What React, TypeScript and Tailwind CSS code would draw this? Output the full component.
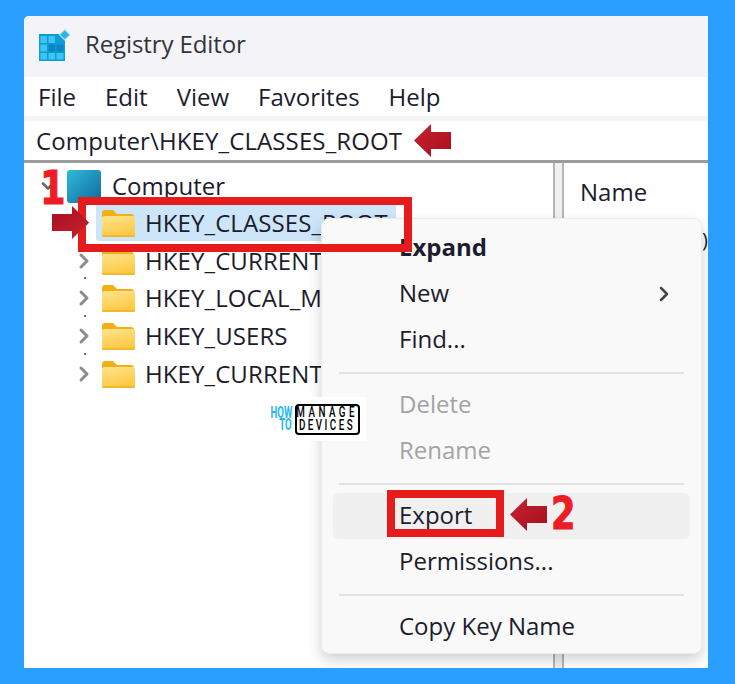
import { ChevronDown, ChevronRight } from 'lucide-react';

const FONT = "font-['Open_Sans','Noto_Sans',sans-serif]";

const rootKeys = [
  'HKEY_CLASSES_ROOT',
  'HKEY_CURRENT_USER',
  'HKEY_LOCAL_MACHINE',
  'HKEY_USERS',
  'HKEY_CURRENT_CONFIG',
];

function RegistryIcon() {
  return (
    <svg width="34" height="34" viewBox="0 0 34 34" className="-mt-[3px] shrink-0">
      <rect x="1" y="6" width="26" height="27" fill="#0f9bd7" />
      <g fill="#3cc4f5">
        <rect x="2.5" y="8" width="6.5" height="7" />
        <rect x="10.5" y="8" width="6.5" height="7" />
        <rect x="2.5" y="16.5" width="6.5" height="7" />
        <rect x="18.5" y="25" width="7" height="6.5" />
        <rect x="10.5" y="25" width="6.5" height="6.5" />
        <rect x="2.5" y="25" width="6.5" height="6.5" />
      </g>
      <g fill="#0a86c4">
        <rect x="10.5" y="16.5" width="6.5" height="7" />
        <rect x="18.5" y="16.5" width="7" height="7" />
      </g>
      <rect x="23" y="3" width="7.5" height="7.5" transform="rotate(45 26.75 6.75)" fill="#2fb4e8" stroke="#bfe6f7" strokeWidth="1" />
    </svg>
  );
}

function FolderIcon() {
  return (
    <svg width="34" height="28" viewBox="0 0 34 28" className="shrink-0">
      <defs>
        <linearGradient id="folderBody" x1="0" y1="0" x2="0.3" y2="1">
          <stop offset="0" stopColor="#ffe48e" />
          <stop offset="1" stopColor="#fdc944" />
        </linearGradient>
      </defs>
      <path d="M1 4a3 3 0 0 1 3-3h8l4 4h14a3 3 0 0 1 3 3v4H1z" fill="#f3b016" />
      <rect x="1" y="7" width="33" height="21" rx="2.5" fill="url(#folderBody)" />
      <rect x="1" y="26" width="33" height="2" rx="1" fill="#f2b92e" />
    </svg>
  );
}

function RedArrow({ flip }: { flip?: boolean }) {
  return (
    <svg width="37" height="33" viewBox="0 0 37 33" className={flip ? 'rotate-180' : ''}>
      <defs>
        <linearGradient id={flip ? 'arrowB' : 'arrowA'} x1="0" y1="0" x2="1" y2="1">
          <stop offset="0" stopColor="#a60f22" />
          <stop offset="1" stopColor="#c8222c" />
        </linearGradient>
      </defs>
      <path d="M0 8h20V0l17 16.500-17 16.500v-8H0z" fill={`url(#${flip ? 'arrowB' : 'arrowA'})`} />
    </svg>
  );
}

function StepNumber({ value, className }: { value: string; className: string }) {
  return (
    <span
      className={`absolute origin-left scale-x-[0.8] font-['DejaVu_Sans',sans-serif] font-bold text-[#ee1c25] [-webkit-text-stroke:1px_#ee1c25] ${className}`}
    >
      {value}
    </span>
  );
}

function TreeRow({ label, selected, dot }: { label: string; selected?: boolean; dot?: boolean }) {
  return (
    <div className="relative flex h-[37.700px] items-center pl-[48px]">
      <ChevronRight size={24} strokeWidth={3} className="shrink-0 text-[#8c8c8c]" />
      <div className={`flex h-[37px] w-[300px] shrink-0 items-center rounded-[3px] pl-[5px] ${selected ? 'bg-[#cce5f9]' : ''}`}>
        <FolderIcon />
        <span className="ml-[10px] whitespace-nowrap text-[24px] leading-none tracking-[0.1px] text-[#1c1c2c]">{label}</span>
      </div>
      {dot && <div className="absolute bottom-0 left-[60px] h-[2px] w-[2px] bg-[#777]" />}
    </div>
  );
}

function MenuItem({
  label,
  bold,
  disabled,
  active,
  more,
}: {
  label: string;
  bold?: boolean;
  disabled?: boolean;
  active?: boolean;
  more?: boolean;
}) {
  return (
    <div
      className={`mx-[11px] flex h-[46px] items-center justify-between rounded-[6px] pl-[66px] pr-[14px] text-[24px] leading-none ${active ? 'bg-[#f0f0f0]' : ''} ${disabled ? 'text-[#a3a3a3]' : 'text-[#1c1c2c]'} ${bold ? 'font-bold' : ''}`}
    >
      <span className="-mt-[3px]">{label}</span>
      {more && <ChevronRight size={24} strokeWidth={2.5} className="text-[#444]" />}
    </div>
  );
}

function MenuDivider() {
  return <div className="mx-[17px] my-[8.500px] h-[2px] bg-[#e2e2e2]" />;
}

function ContextMenu() {
  return (
    <div className="absolute left-[297px] top-[202px] z-10 h-[436px] w-[381px] rounded-[8px] border border-[#ececec] bg-[#f9f9f9] pt-[6px] shadow-[0_6px_14px_rgba(0,0,0,0.18)]">
      <MenuItem label="Expand" bold />
      <MenuItem label="New" more />
      <MenuItem label="Find..." />
      <MenuDivider />
      <MenuItem label="Delete" disabled />
      <MenuItem label="Rename" disabled />
      <MenuDivider />
      <MenuItem label="Export" active />
      <MenuItem label="Permissions..." />
      <MenuDivider />
      <MenuItem label="Copy Key Name" />
    </div>
  );
}

function Watermark() {
  return (
    <div className="absolute left-[240px] top-[381px] z-[15] flex h-[44px] w-[102px] items-center gap-[3px] bg-white pl-[5px]">
      <div className="flex w-[23px] flex-col items-end font-['Roboto',sans-serif] text-[16px] font-bold leading-[12px] text-[#22b8f0]">
        <span className="origin-right scale-x-[0.6]">HOW</span>
        <span className="origin-right scale-x-[0.6]">TO</span>
      </div>
      <div className="flex h-[31px] w-[65px] shrink-0 flex-col items-center justify-center whitespace-nowrap rounded-[4px] border-2 border-black font-['Roboto',sans-serif] text-[14px] font-medium leading-[13px] text-black">
        <span className="scale-x-[0.7] tracking-[5px]">MANAGE</span>
        <span className="scale-x-[0.7] tracking-[3.500px]">DEVICES</span>
      </div>
    </div>
  );
}

export default function App() {
  return (
    <div className={`h-[684px] w-[735px] overflow-hidden bg-[#2a9fff] pb-[16px] pl-[24px] pr-[27px] pt-[16px] ${FONT}`}>
      <div className="relative flex h-[652px] flex-col overflow-hidden rounded-tl-[5px] bg-white">
        <div className="flex h-[61px] shrink-0 items-center bg-[#f3f3f8] pl-[14px]">
          <RegistryIcon />
          <span className="-mt-[5px] ml-[13px] text-[24px] leading-none tracking-[-0.1px] text-[#33333b]">Registry Editor</span>
        </div>

        <div className="flex h-[39px] shrink-0 items-center gap-[29px] pl-[14px] text-[24px] leading-none text-[#1c1c2c]">
          <span>File</span>
          <span>Edit</span>
          <span>View</span>
          <span>Favorites</span>
          <span>Help</span>
        </div>

        <div className="h-[5px] shrink-0 bg-[#f4f4f4]" />

        <div className="flex h-[39px] shrink-0 items-center pl-[12px] text-[24px] leading-none tracking-[0.12px] text-[#1c1c2c]">
          Computer\HKEY_CLASSES_ROOT
          <span className="ml-[12px] flex"><RedArrow flip /></span>
        </div>

        <div className="h-[3px] shrink-0 bg-[#9c9c9c]" />

        <div className="flex min-h-0 flex-1">
          <div className="w-[529px] shrink-0 pt-[5px]">
            <div className="flex h-[36px] items-center pl-[14px]">
              <ChevronDown size={20} strokeWidth={3} className="text-[#666]" />
              <div className="ml-[9px] h-[33px] w-[34px] rounded-[3px] bg-gradient-to-br from-[#2fbcd8] to-[#14699f]" />
              <span className="ml-[11px] text-[24px] leading-none text-[#1c1c2c]">Computer</span>
            </div>
            {rootKeys.map((key, i) => (
              <TreeRow key={key} label={key} selected={i === 0} dot={i > 0 && i < 4} />
            ))}
          </div>
          <div className="w-[11px] shrink-0 border-x-2 border-[#b5b5b5] bg-[#f0f0f0]" />
          <div className="flex-1 pl-[16px] pt-[17px] text-[24px] leading-none text-[#1c1c2c]">Name</div>
        </div>

        <span className="absolute left-[678px] top-[214px] text-[20px] leading-none text-[#1c1c2c]">)</span>
        <Watermark />
        <ContextMenu />

        {/* annotations sit on top of the screenshot */}
        <div className="absolute left-[54px] top-[181px] z-20 h-[55px] w-[334px] border-[8px] border-[#e61c1c]" />
        <div className="absolute left-[363px] top-[474px] z-20 h-[47px] w-[117px] border-[8px] border-[#e61c1c]" />
        <div className="absolute left-[28px] top-[190px] z-20 flex"><RedArrow /></div>
        <div className="absolute left-[486px] top-[482px] z-20 flex"><RedArrow flip /></div>
        <StepNumber value="1" className="left-[16px] top-[144px] z-20 text-[46px] leading-[56px]" />
        <StepNumber value="2" className="left-[527px] top-[471px] z-20 text-[44px] leading-[54px]" />
      </div>
    </div>
  );
}
